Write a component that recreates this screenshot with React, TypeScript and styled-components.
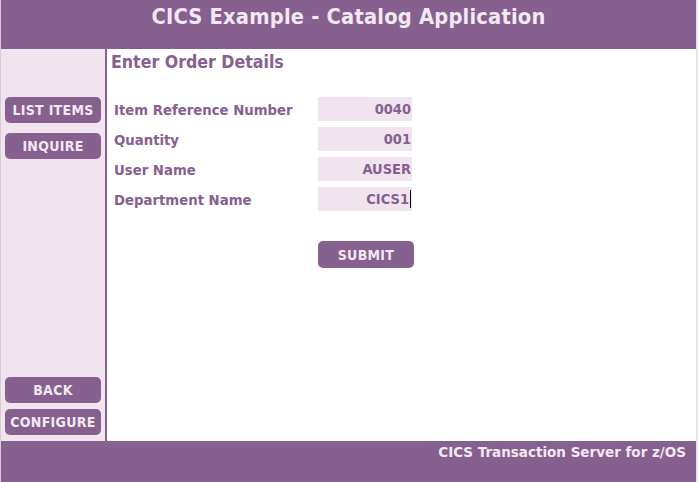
import React from "react";
import styled, { createGlobalStyle } from "styled-components";

const Global = createGlobalStyle`
  html, body { margin: 0; padding: 0; background: #ffffff; }
  body { font-family: "DejaVu Sans Condensed", "DejaVu Sans", sans-serif; }
  #root { height: 482px; }
`;

const purple = "#86608f";
const pale = "#f0e5ef";
const light = "#f2e8f2";

const Page = styled.div`
  height: 482px;
  display: flex;
  flex-direction: column;
  border-left: 1px solid #d8cbd8;
  border-right: 2px solid #e6e6e6;
  box-sizing: border-box;
`;

const Header = styled.header`
  height: 49px;
  background: ${purple};
  color: ${light};
  display: flex;
  justify-content: center;
  padding-top: 4px;
  box-sizing: border-box;
  font-size: 21.7px;
  font-weight: bold;
  letter-spacing: 0.2px;
`;

const Body = styled.div`
  flex: 1;
  display: flex;
  min-height: 0;
`;

const Sidebar = styled.nav`
  width: 106px;
  background: ${pale};
  border-right: 2px solid ${purple};
  display: flex;
  flex-direction: column;
  justify-content: space-between;
  padding: 48px 0 6px 4px;
  box-sizing: border-box;
`;

const NavGroup = styled.div`
  display: flex;
  flex-direction: column;
  gap: 10px;
`;

const NavGroupTight = styled(NavGroup)`
  gap: 6px;
`;

const NavButton = styled.button`
  width: 96px;
  height: 26px;
  background: ${purple};
  color: ${light};
  border: none;
  border-radius: 5px;
  font-family: inherit;
  font-weight: bold;
  font-size: 14px;
  letter-spacing: 0.3px;
  padding: 0;
`;

const Main = styled.main`
  flex: 1;
  padding: 3px 0 0 3px;
`;

const Title = styled.h1`
  margin: 0;
  padding-left: 1px;
  font-size: 17.6px;
  font-weight: bold;
  color: ${purple};
`;

const Form = styled.div`
  margin-top: 25px;
  display: grid;
  grid-template-columns: 204px 94px;
  row-gap: 6px;
  padding-left: 4px;
  align-items: center;
`;

const Label = styled.label`
  font-size: 14.75px;
  font-weight: bold;
  color: ${purple};
`;

const Field = styled.div`
  height: 24px;
  background: ${pale};
  color: ${purple};
  font-size: 14.5px;
  font-weight: bold;
  display: flex;
  align-items: center;
  justify-content: flex-end;
  padding-right: 1px;
  box-sizing: border-box;
`;

const Caret = styled.span`
  display: inline-block;
  width: 1px;
  height: 18px;
  background: #000;
  margin-left: 1px;
`;

const SubmitRow = styled.div`
  margin-top: 30px;
  padding-left: 208px;
`;

const SubmitButton = styled(NavButton)`
  width: 96px;
  height: 27px;
  font-size: 14px;
`;

const Footer = styled.footer`
  height: 41px;
  background: ${purple};
  color: ${light};
  display: flex;
  justify-content: flex-end;
  padding: 3px 10px 0 0;
  box-sizing: border-box;
  font-family: "DejaVu Sans", sans-serif;
  font-size: 13.5px;
  font-weight: bold;
`;

const fields: { label: string; value: string; caret?: boolean }[] = [
  { label: "Item Reference Number", value: "0040" },
  { label: "Quantity", value: "001" },
  { label: "User Name", value: "AUSER" },
  { label: "Department Name", value: "CICS1", caret: true },
];

export default function App() {
  return (
    <>
      <Global />
      <Page>
        <Header>CICS Example - Catalog Application</Header>
        <Body>
          <Sidebar>
            <NavGroup>
              <NavButton>LIST ITEMS</NavButton>
              <NavButton>INQUIRE</NavButton>
            </NavGroup>
            <NavGroupTight>
              <NavButton>BACK</NavButton>
              <NavButton>CONFIGURE</NavButton>
            </NavGroupTight>
          </Sidebar>
          <Main>
            <Title>Enter Order Details</Title>
            <Form>
              {fields.map((f) => (
                <React.Fragment key={f.label}>
                  <Label>{f.label}</Label>
                  <Field>
                    {f.value}
                    {f.caret && <Caret />}
                  </Field>
                </React.Fragment>
              ))}
            </Form>
            <SubmitRow>
              <SubmitButton>SUBMIT</SubmitButton>
            </SubmitRow>
          </Main>
        </Body>
        <Footer>CICS Transaction Server for z/OS</Footer>
      </Page>
    </>
  );
}
